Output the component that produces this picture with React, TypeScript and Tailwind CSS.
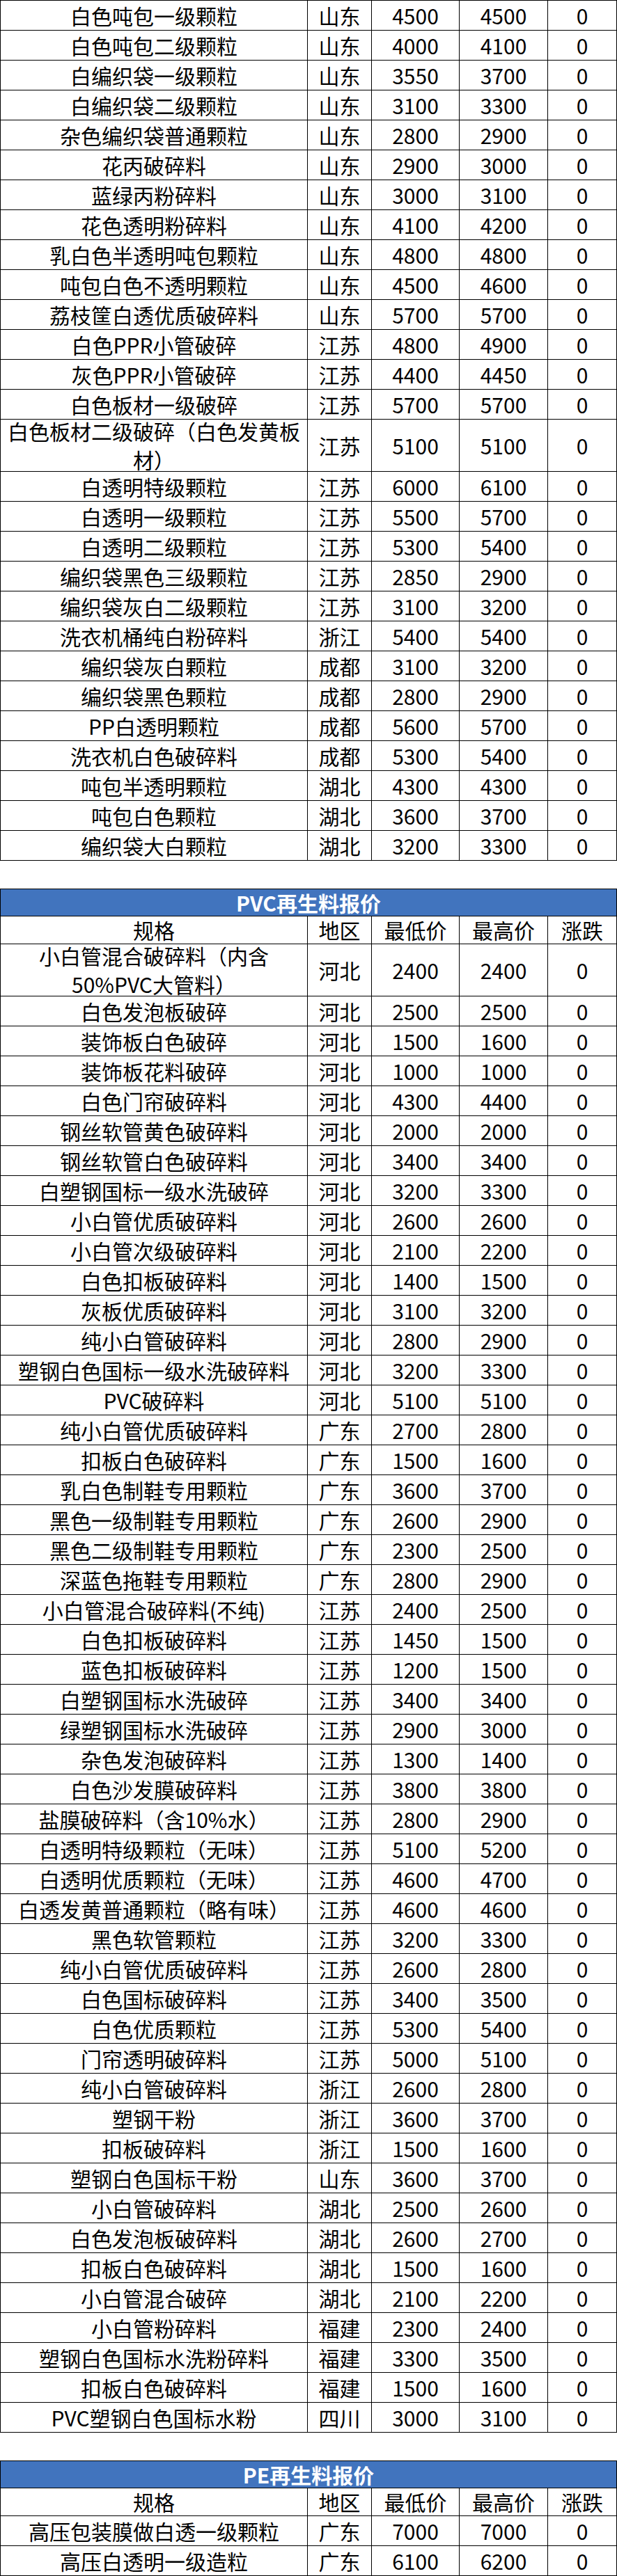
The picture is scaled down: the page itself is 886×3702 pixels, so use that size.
type Row = [string, string, number, number, number, boolean?];

const ppRows: Row[] = [
  ['白色吨包一级颗粒', '山东', 4500, 4500, 0],
  ['白色吨包二级颗粒', '山东', 4000, 4100, 0],
  ['白编织袋一级颗粒', '山东', 3550, 3700, 0],
  ['白编织袋二级颗粒', '山东', 3100, 3300, 0],
  ['杂色编织袋普通颗粒', '山东', 2800, 2900, 0],
  ['花丙破碎料', '山东', 2900, 3000, 0],
  ['蓝绿丙粉碎料', '山东', 3000, 3100, 0],
  ['花色透明粉碎料', '山东', 4100, 4200, 0],
  ['乳白色半透明吨包颗粒', '山东', 4800, 4800, 0],
  ['吨包白色不透明颗粒', '山东', 4500, 4600, 0],
  ['荔枝筐白透优质破碎料', '山东', 5700, 5700, 0],
  ['白色PPR小管破碎', '江苏', 4800, 4900, 0],
  ['灰色PPR小管破碎', '江苏', 4400, 4450, 0],
  ['白色板材一级破碎', '江苏', 5700, 5700, 0],
  ['白色板材二级破碎（白色发黄板材）', '江苏', 5100, 5100, 0, true],
  ['白透明特级颗粒', '江苏', 6000, 6100, 0],
  ['白透明一级颗粒', '江苏', 5500, 5700, 0],
  ['白透明二级颗粒', '江苏', 5300, 5400, 0],
  ['编织袋黑色三级颗粒', '江苏', 2850, 2900, 0],
  ['编织袋灰白二级颗粒', '江苏', 3100, 3200, 0],
  ['洗衣机桶纯白粉碎料', '浙江', 5400, 5400, 0],
  ['编织袋灰白颗粒', '成都', 3100, 3200, 0],
  ['编织袋黑色颗粒', '成都', 2800, 2900, 0],
  ['PP白透明颗粒', '成都', 5600, 5700, 0],
  ['洗衣机白色破碎料', '成都', 5300, 5400, 0],
  ['吨包半透明颗粒', '湖北', 4300, 4300, 0],
  ['吨包白色颗粒', '湖北', 3600, 3700, 0],
  ['编织袋大白颗粒', '湖北', 3200, 3300, 0],
];

const pvcRows: Row[] = [
  ['小白管混合破碎料（内含50%PVC大管料）', '河北', 2400, 2400, 0, true],
  ['白色发泡板破碎', '河北', 2500, 2500, 0],
  ['装饰板白色破碎', '河北', 1500, 1600, 0],
  ['装饰板花料破碎', '河北', 1000, 1000, 0],
  ['白色门帘破碎料', '河北', 4300, 4400, 0],
  ['钢丝软管黄色破碎料', '河北', 2000, 2000, 0],
  ['钢丝软管白色破碎料', '河北', 3400, 3400, 0],
  ['白塑钢国标一级水洗破碎', '河北', 3200, 3300, 0],
  ['小白管优质破碎料', '河北', 2600, 2600, 0],
  ['小白管次级破碎料', '河北', 2100, 2200, 0],
  ['白色扣板破碎料', '河北', 1400, 1500, 0],
  ['灰板优质破碎料', '河北', 3100, 3200, 0],
  ['纯小白管破碎料', '河北', 2800, 2900, 0],
  ['塑钢白色国标一级水洗破碎料', '河北', 3200, 3300, 0],
  ['PVC破碎料', '河北', 5100, 5100, 0],
  ['纯小白管优质破碎料', '广东', 2700, 2800, 0],
  ['扣板白色破碎料', '广东', 1500, 1600, 0],
  ['乳白色制鞋专用颗粒', '广东', 3600, 3700, 0],
  ['黑色一级制鞋专用颗粒', '广东', 2600, 2900, 0],
  ['黑色二级制鞋专用颗粒', '广东', 2300, 2500, 0],
  ['深蓝色拖鞋专用颗粒', '广东', 2800, 2900, 0],
  ['小白管混合破碎料(不纯)', '江苏', 2400, 2500, 0],
  ['白色扣板破碎料', '江苏', 1450, 1500, 0],
  ['蓝色扣板破碎料', '江苏', 1200, 1500, 0],
  ['白塑钢国标水洗破碎', '江苏', 3400, 3400, 0],
  ['绿塑钢国标水洗破碎', '江苏', 2900, 3000, 0],
  ['杂色发泡破碎料', '江苏', 1300, 1400, 0],
  ['白色沙发膜破碎料', '江苏', 3800, 3800, 0],
  ['盐膜破碎料（含10%水）', '江苏', 2800, 2900, 0],
  ['白透明特级颗粒（无味）', '江苏', 5100, 5200, 0],
  ['白透明优质颗粒（无味）', '江苏', 4600, 4700, 0],
  ['白透发黄普通颗粒（略有味）', '江苏', 4600, 4600, 0],
  ['黑色软管颗粒', '江苏', 3200, 3300, 0],
  ['纯小白管优质破碎料', '江苏', 2600, 2800, 0],
  ['白色国标破碎料', '江苏', 3400, 3500, 0],
  ['白色优质颗粒', '江苏', 5300, 5400, 0],
  ['门帘透明破碎料', '江苏', 5000, 5100, 0],
  ['纯小白管破碎料', '浙江', 2600, 2800, 0],
  ['塑钢干粉', '浙江', 3600, 3700, 0],
  ['扣板破碎料', '浙江', 1500, 1600, 0],
  ['塑钢白色国标干粉', '山东', 3600, 3700, 0],
  ['小白管破碎料', '湖北', 2500, 2600, 0],
  ['白色发泡板破碎料', '湖北', 2600, 2700, 0],
  ['扣板白色破碎料', '湖北', 1500, 1600, 0],
  ['小白管混合破碎', '湖北', 2100, 2200, 0],
  ['小白管粉碎料', '福建', 2300, 2400, 0],
  ['塑钢白色国标水洗粉碎料', '福建', 3300, 3500, 0],
  ['扣板白色破碎料', '福建', 1500, 1600, 0],
  ['PVC塑钢白色国标水粉', '四川', 3000, 3100, 0],
];

const peRows: Row[] = [
  ['高压包装膜做白透一级颗粒', '广东', 7000, 7000, 0],
  ['高压白透明一级造粒', '广东', 6100, 6200, 0],
];

const widths = ['w-[441px]', 'w-[92px]', 'w-[126px]', 'w-[127px]', 'w-[99px]'];

function Cell({ w, children }: { w: string; children: React.ReactNode }) {
  return (
    <div className={`${w} shrink-0 h-full border-r border-black flex items-center justify-center text-center px-[6px]`}>
      {children}
    </div>
  );
}

function DataRow({ row }: { row: Row }) {
  const [name, region, low, high, change, tall] = row;
  return (
    <div className={`flex border-b border-black ${tall ? 'h-[75px]' : 'h-[43px]'}`}>
      <Cell w={widths[0]}>{name}</Cell>
      <Cell w={widths[1]}>{region}</Cell>
      <Cell w={widths[2]}>{low}</Cell>
      <Cell w={widths[3]}>{high}</Cell>
      <Cell w={widths[4]}>{change}</Cell>
    </div>
  );
}

function Section({ title, rows }: { title?: string; rows: Row[] }) {
  return (
    <div className="border-l border-t border-black">
      {title && (
        <>
          <div className="h-[39px] bg-[#4174be] border-r border-b border-black flex items-center justify-center text-white font-bold">
            {title}
          </div>
          <div className="flex h-[40px] border-b border-black">
            {['规格', '地区', '最低价', '最高价', '涨跌'].map((h, i) => (
              <Cell key={h} w={widths[i]}>{h}</Cell>
            ))}
          </div>
        </>
      )}
      {rows.map((r, i) => (
        <DataRow key={i} row={r} />
      ))}
    </div>
  );
}

export default function App() {
  return (
    <div className="w-[886px] bg-white text-black text-[30px] leading-[41px] font-['Noto_Sans_CJK_SC','Noto_Sans',sans-serif]">
      <Section rows={ppRows} />
      <div className="h-[40px]" />
      <Section title="PVC再生料报价" rows={pvcRows} />
      <div className="h-[40px]" />
      <Section title="PE再生料报价" rows={peRows} />
    </div>
  );
}
